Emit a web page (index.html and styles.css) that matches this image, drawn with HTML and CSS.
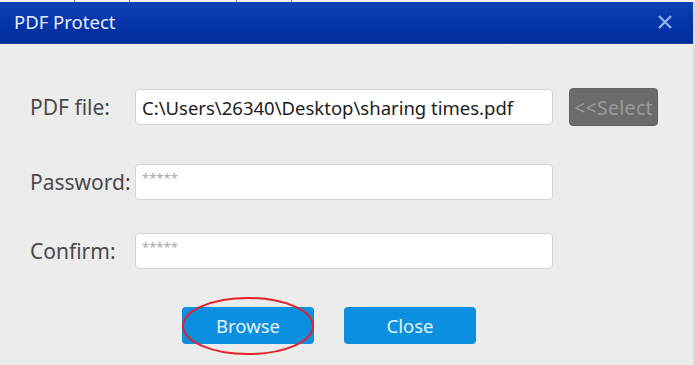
FILE: index.html
```html
<!DOCTYPE html>
<html lang="en">
<head>
<meta charset="UTF-8">
<meta name="viewport" content="width=device-width, initial-scale=1.0">
<title>PDF Protect</title>
<link rel="stylesheet" href="styles.css">
</head>
<body>
<div class="backdrop">
  <span class="tick t1"></span><span class="tick t2"></span><span class="tick t3"></span><span class="tick t4"></span>
</div>
<div class="dialog">
  <div class="titlebar">
    <span class="title">PDF Protect</span>
    <svg class="close-x" width="16" height="16" viewBox="0 0 16 16">
      <path d="M2 2 L14 14 M14 2 L2 14" stroke="#8fb0f0" stroke-width="2.4" fill="none"/>
    </svg>
  </div>
  <div class="content">
    <div class="row row-file">
      <label class="label">PDF file:</label>
      <div class="field field-value">C:\Users\26340\Desktop\sharing times.pdf</div>
      <button class="select-btn">&lt;&lt;Select</button>
    </div>
    <div class="row row-pass">
      <label class="label">Password:</label>
      <div class="field field-hint">*****</div>
    </div>
    <div class="row row-confirm">
      <label class="label">Confirm:</label>
      <div class="field field-hint">*****</div>
    </div>
    <div class="actions">
      <div class="btn-wrap">
        <button class="btn">Browse</button>
        <svg class="mark" width="136" height="62" viewBox="0 0 136 62">
          <ellipse cx="68" cy="31" rx="65" ry="28" stroke="#e8202a" stroke-width="2" fill="none"/>
        </svg>
      </div>
      <button class="btn">Close</button>
    </div>
  </div>
</div>
</body>
</html>
```

FILE: styles.css
```css
html, body {
  margin: 0;
  padding: 0;
}

body {
  width: 695px;
  height: 365px;
  overflow: hidden;
  font-family: "Noto Sans", "Open Sans", sans-serif;
  background: #ececec;
}

.backdrop {
  height: 2px;
  background: #f4f4f4;
  display: flex;
}

.tick {
  width: 1px;
  height: 2px;
  background: #9a9a9a;
}
.t1 { margin-left: 74px; }
.t2 { margin-left: 54px; }
.t3 { margin-left: 106px; }
.t4 { margin-left: 54px; }

.dialog {
  height: 363px;
  border-right: 2px solid #dcdcdc;
  box-sizing: border-box;
}

.titlebar {
  height: 42px;
  background: linear-gradient(#0d42b5, #0433a6 60%, #002d9b);
  border-bottom: 1px solid #1a3fa0;
  display: flex;
  align-items: center;
  justify-content: space-between;
  padding: 0 20px 0 14px;
  box-sizing: border-box;
}

.title {
  color: #e8ecf8;
  font-size: 18.5px;
  margin-top: -2px;
}

.close-x {
  margin-top: -2px;
}

.content {
  padding: 44px 0 0 30px;
}

.row {
  display: flex;
  align-items: center;
}

.row-pass { margin-top: 38px; }
.row-confirm { margin-top: 33px; }

.label {
  width: 105px;
  font-size: 21px;
  color: #4a4a4a;
  white-space: nowrap;
}

.field {
  width: 418px;
  height: 36px;
  box-sizing: border-box;
  background: #fff;
  border: 1px solid #d4d4d4;
  border-radius: 4px;
  padding-left: 6px;
  display: flex;
  align-items: center;
}

.field-value {
  font-size: 18.5px;
  color: #1c1c1c;
}

.field-hint {
  font-size: 13px;
  color: #a8a8a8;
  padding-top: 4px;
  align-items: flex-start;
}

.select-btn {
  margin-left: 16px;
  width: 89px;
  height: 38px;
  background: #6b6b6b;
  border: 1px solid #626262;
  border-radius: 4px;
  color: #9a9a9a;
  font-family: inherit;
  font-size: 19.5px;
  letter-spacing: 0.3px;
  padding: 0;
  white-space: nowrap;
}

.actions {
  display: flex;
  gap: 30px;
  margin-top: 38px;
  padding-left: 152px;
}

.btn-wrap {
  position: relative;
}

.btn {
  width: 132px;
  height: 37px;
  background: #0b8fdf;
  border: none;
  border-radius: 4px;
  color: #e6f2fc;
  font-family: inherit;
  font-size: 18.5px;
  padding: 0;
  display: block;
}

.mark {
  position: absolute;
  left: -2px;
  top: -12px;
}
```
